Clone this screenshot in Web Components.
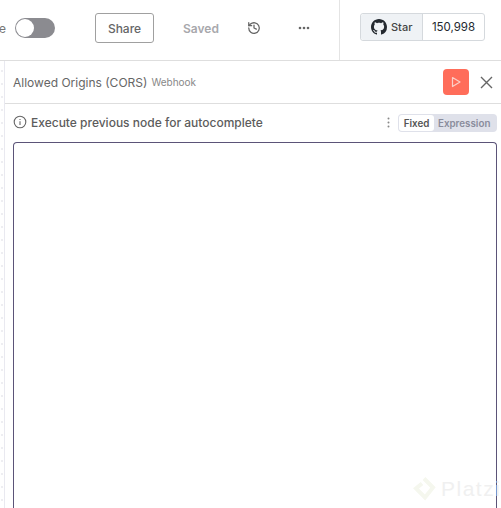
<!DOCTYPE html>
<html>
<head>
<meta charset="utf-8">
<style>
  html, body { margin: 0; height: 100%; overflow: hidden; background: #fff; }
  body {
    font-family: Inter, "Liberation Sans", sans-serif;
    display: flex; flex-direction: column; width: 501px; height: 508px;
    background-image: radial-gradient(circle at 2px 6px, #eeeef2 1px, transparent 1.5px);
    background-size: 100% 13px;
  }
</style>
</head>
<body>
<top-bar></top-bar>
<node-panel></node-panel>

<script>
const topBarTemplate = document.createElement('template');
topBarTemplate.innerHTML = `
<style>
  :host { display: flex; flex: none; height: 60px; border-bottom: 1px solid #dedede; background: #fff; color: #555; overflow: hidden; }
  .left { display: flex; align-items: center; width: 340px; flex: none; box-sizing: border-box; padding-bottom: 4px; border-right: 1px solid #e4e4e4; }
  .cut { font-size: 12px; color: #777; margin-left: -1px; width: 7px; overflow: hidden; direction: rtl; }
  .toggle { width: 40px; height: 20px; margin-left: 9px; border-radius: 10px; background: #8b8b90; position: relative; }
  .toggle i { position: absolute; left: 1px; top: 1px; width: 18px; height: 18px; border-radius: 50%; background: #fff; }
  .share { margin-left: 40px; width: 59px; height: 30px; box-sizing: border-box; border: 1px solid #a0a0a0; border-radius: 3px; font-size: 12px; font-weight: 500; color: #666; display: flex; align-items: center; justify-content: center; }
  .saved { margin-left: 29px; font-size: 12px; font-weight: 600; color: #a8a8ac; }
  .history { margin-left: 28px; width: 14px; height: 14px; }
  .more { margin-left: 37px; width: 12px; height: 4px; }
  .right { flex: 1; display: flex; align-items: center; padding-left: 20px; padding-bottom: 6px; }
  .gh { display: flex; height: 28px; box-sizing: border-box; border: 1px solid #d5d9dd; border-radius: 3px; font-size: 11.5px; color: #24292f; }
  .star { display: flex; align-items: center; gap: 4px; width: 62px; box-sizing: border-box; padding-left: 10px; background: #eff2f5; border-right: 1px solid #d5d9dd; border-radius: 3px 0 0 3px; font-size: 11px; font-weight: 500; color: #444; }
  .count { display: flex; align-items: center; justify-content: center; width: 61px; }
  .star svg { width: 16px; height: 16px; }
</style>
<div class="left">
  <span class="cut">e</span>
  <div class="toggle"><i></i></div>
  <div class="share">Share</div>
  <span class="saved">Saved</span>
  <svg class="history" viewBox="0 0 24 24" fill="none" stroke="#666" stroke-width="2.2" stroke-linecap="round" stroke-linejoin="round"><path d="M3 12a9 9 0 1 0 3-6.7L3 8"/><path d="M3 3v5h5"/><path d="M12 7v5l4 2"/></svg>
  <svg class="more" viewBox="0 0 12 4" fill="#666"><circle cx="2" cy="2" r="1.3"/><circle cx="6" cy="2" r="1.3"/><circle cx="10" cy="2" r="1.3"/></svg>
</div>
<div class="right">
  <div class="gh">
    <span class="star"><svg viewBox="0 0 16 16" fill="#24292f"><path d="M8 0C3.58 0 0 3.58 0 8c0 3.54 2.29 6.53 5.47 7.59.4.07.55-.17.55-.38 0-.19-.01-.82-.01-1.49-2.01.37-2.53-.49-2.69-.94-.09-.23-.48-.94-.82-1.13-.28-.15-.68-.52-.01-.53.63-.01 1.08.58 1.23.82.72 1.21 1.87.87 2.33.66.07-.52.28-.87.51-1.07-1.78-.2-3.64-.89-3.64-3.95 0-.87.31-1.59.82-2.15-.08-.2-.36-1.02.08-2.12 0 0 .67-.21 2.2.82.64-.18 1.32-.27 2-.27s1.36.09 2 .27c1.53-1.04 2.2-.82 2.2-.82.44 1.1.16 1.92.08 2.12.51.56.82 1.27.82 2.15 0 3.07-1.87 3.75-3.65 3.95.29.25.54.73.54 1.48 0 1.07-.01 1.93-.01 2.2 0 .21.15.46.55.38A8.01 8.01 0 0 0 16 8c0-4.42-3.58-8-8-8z"/></svg>Star</span>
    <span class="count">150,998</span>
  </div>
</div>
`;

class TopBar extends HTMLElement {
  constructor() {
    super();
    this.attachShadow({mode: 'open'}).append(topBarTemplate.content.cloneNode(true));
  }
}
customElements.define('top-bar', TopBar);

const nodePanelTemplate = document.createElement('template');
nodePanelTemplate.innerHTML = `
<style>
  :host { display: flex; flex-direction: column; flex: 1; min-height: 0; margin-left: 4px; border-left: 1px solid #e9e9f0; background: #fff; position: relative; }
  .head { display: flex; align-items: center; height: 42px; flex: none; border-bottom: 1px solid #dedede; padding-left: 8px; }
  .title { font-size: 12px; color: #666; }
  .sub { font-size: 10px; color: #888; margin-left: 4px; }
  .run { margin-left: auto; width: 26px; height: 26px; border-radius: 4px; background: #ff6d5a; display: flex; align-items: center; justify-content: center; }
  .run svg { width: 12px; height: 12px; }
  .close { width: 13px; height: 13px; margin: 0 8px 0 11px; }
  .tools { display: flex; align-items: center; height: 38px; flex: none; padding: 0 4px 2px 8px; box-sizing: border-box; }
  .info { width: 14px; height: 14px; margin-right: 4px; }
  .hint { font-size: 12px; font-weight: 500; color: #5c5c5c; }
  .dots { margin-left: auto; width: 3px; height: 11px; margin-right: 8px; }
  mode-switch { position: relative; top: 1px; }
  .field { flex: 1; min-height: 0; margin: 0 4px 0 8px; border: 1px solid #5b5478; border-bottom: 0; border-radius: 4px 4px 0 0; }
</style>
<div class="head">
  <span class="title">Allowed Origins (CORS)</span>
  <span class="sub">Webhook</span>
  <div class="run"><svg viewBox="0 0 12 12" fill="none" stroke="#fbd0c8" stroke-width="1.2" stroke-linejoin="round"><path d="M2.5 1.5 10 6l-7.5 4.5z"/></svg></div>
  <svg class="close" viewBox="0 0 13 13" stroke="#666" stroke-width="1.4" fill="none"><path d="M1 1l11 11M12 1 1 12"/></svg>
</div>
<div class="tools">
  <svg class="info" viewBox="0 0 14 14" fill="none" stroke="#666" stroke-width="1.1"><circle cx="7" cy="7" r="5.8"/><path d="M7 6.3v3.6"/><path d="M7 4v1.1"/></svg>
  <span class="hint">Execute previous node for autocomplete</span>
  <svg class="dots" viewBox="0 0 3 11" fill="#888"><circle cx="1.5" cy="1.5" r="1"/><circle cx="1.5" cy="5.5" r="1"/><circle cx="1.5" cy="9.5" r="1"/></svg>
  <mode-switch></mode-switch>
</div>
<div class="field"></div>
<platzi-mark></platzi-mark>
`;

class NodePanel extends HTMLElement {
  constructor() {
    super();
    this.attachShadow({mode: 'open'}).append(nodePanelTemplate.content.cloneNode(true));
  }
}
customElements.define('node-panel', NodePanel);

const modeSwitchTemplate = document.createElement('template');
modeSwitchTemplate.innerHTML = `
<style>
  :host { display: flex; align-items: center; height: 18px; width: 99px; box-sizing: border-box; padding: 1px; background: #dfe1ea; border-radius: 4px; font-size: 9.8px; font-weight: 600; }
  .on { background: #fff; color: #555; height: 16px; width: 35px; flex: none; border-radius: 3px; display: flex; align-items: center; justify-content: center; }
  .off { color: #8a8c9c; margin-left: 4px; }
</style>
<span class="on">Fixed</span><span class="off">Expression</span>
`;

class ModeSwitch extends HTMLElement {
  constructor() {
    super();
    this.attachShadow({mode: 'open'}).append(modeSwitchTemplate.content.cloneNode(true));
  }
}
customElements.define('mode-switch', ModeSwitch);

const platziTemplate = document.createElement('template');
platziTemplate.innerHTML = `
<style>
  :host { position: absolute; left: 407px; bottom: 6px; display: flex; align-items: center; gap: 5px; font-family: "Liberation Sans", sans-serif; font-size: 21px; letter-spacing: 1.5px; color: #f0f0f0; }
  svg { width: 24px; height: 27px; }
</style>
<svg viewBox="0 0 24 26" fill="none" stroke="#f5f7ee" stroke-width="4"><path d="M12 3 21 12 13 22 4 13 10 8"/></svg>
<span>Platzi</span>
`;

class PlatziMark extends HTMLElement {
  constructor() {
    super();
    this.attachShadow({mode: 'open'}).append(platziTemplate.content.cloneNode(true));
  }
}
customElements.define('platzi-mark', PlatziMark);
</script>
</body>
</html>
